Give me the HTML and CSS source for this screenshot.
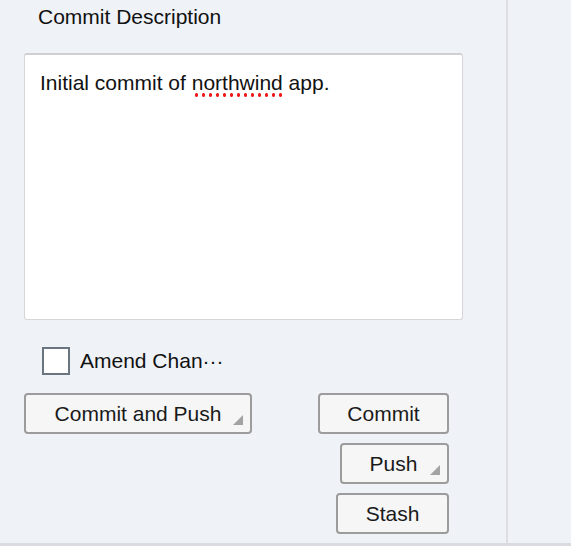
FILE: index.html
```html
<!DOCTYPE html>
<html>
<head>
<meta charset="utf-8">
<link rel="stylesheet" href="styles.css">
</head>
<body>
<div class="screen">
  <div class="panel">
    <div class="title">Commit Description</div>
    <div class="desc">Initial commit of <span class="misspelled">northwind</span> app.</div>
    <label class="amend">
      <span class="checkbox"></span>
      <span class="amend-label">Amend Chan···</span>
    </label>
    <div class="actions">
      <button class="btn btn-wide">Commit and Push<span class="corner"></span></button>
      <div class="stack">
        <button class="btn btn-commit">Commit</button>
        <button class="btn btn-push">Push<span class="corner"></span></button>
        <button class="btn btn-stash">Stash</button>
      </div>
    </div>
  </div>
  <div class="side"></div>
</div>
</body>
</html>
```
FILE: styles.css
```css
html, body {
  margin: 0;
  padding: 0;
  background: #eff2f7;
}
body {
  font-family: "Liberation Sans", Arial, sans-serif;
  color: #111;
  width: 571px;
  height: 546px;
  overflow: hidden;
}
.screen {
  display: flex;
  height: 543px;
  border-bottom: 3px solid #d9dbe0;
}
.panel {
  width: 506px;
  box-sizing: border-box;
  padding: 0 43px 0 24px;
  display: flex;
  flex-direction: column;
}
.side {
  width: 2px;
  background: #dcdee3;
}
.title {
  font-size: 21px;
  line-height: 24px;
  margin: 5px 0 0 14px;
  height: 24px;
}
.desc {
  margin-top: 24px;
  height: 267px;
  box-sizing: border-box;
  background: #fff;
  border: 1px solid #d6d6d6;
  border-top: 2px solid #cfcfcf;
  border-radius: 3px;
  padding: 16px 15px;
  font-size: 21px;
  line-height: 24px;
}
.misspelled {
  background-image: radial-gradient(circle, #ee1c1c 1.6px, transparent 2px);
  background-size: 7px 4px;
  background-repeat: repeat-x;
  background-position: 1px 100%;
  padding-bottom: 3px;
}
.amend {
  display: flex;
  align-items: center;
  margin: 27px 0 0 18px;
  height: 28px;
}
.checkbox {
  width: 28px;
  height: 28px;
  box-sizing: border-box;
  border: 2px solid #6b7580;
  background: #fff;
}
.amend-label {
  margin-left: 10px;
  font-size: 21px;
}
.actions {
  display: flex;
  justify-content: space-between;
  align-items: flex-start;
  margin-top: 18px;
}
.stack {
  display: flex;
  flex-direction: column;
  align-items: flex-end;
  gap: 9px;
  margin-right: 14px;
}
.btn {
  position: relative;
  height: 41px;
  box-sizing: border-box;
  background: #f6f6f6;
  border: 2px solid #9c9c9c;
  border-radius: 4px;
  font-family: "Liberation Sans", Arial, sans-serif;
  font-size: 21px;
  color: #1a1a1a;
  padding: 0;
}
.btn-wide { width: 228px; }
.btn-commit { width: 131px; }
.btn-push { width: 109px; padding-right: 2px; }
.btn-stash { width: 113px; }
.corner {
  position: absolute;
  right: 7px;
  bottom: 7px;
  width: 0;
  height: 0;
  border-left: 10px solid transparent;
  border-bottom: 10px solid #a3a3a3;
}
```
